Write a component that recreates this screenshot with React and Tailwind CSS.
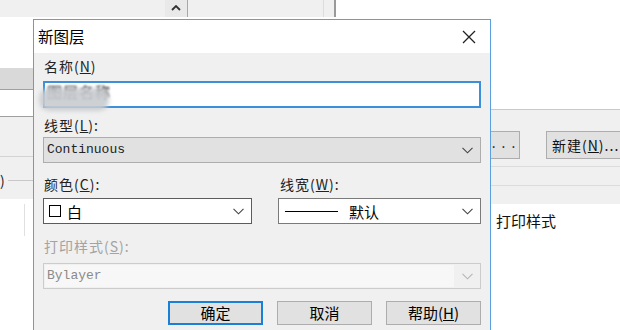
import React from 'react';

const cjk = { fontFamily: '"Noto Sans CJK SC", "Noto Sans", sans-serif' };
const mono = { fontFamily: '"Liberation Mono", "Noto Sans CJK SC", monospace' };

function Chevron({ color = '#444' }) {
  return (
    <svg width="11" height="7" viewBox="0 0 11 7" className="shrink-0">
      <polyline points="0.5,0.8 5.5,5.8 10.5,0.8" fill="none" stroke={color} strokeWidth="1.1" />
    </svg>
  );
}

function Label({ children, className = '' }) {
  return (
    <div className={`h-[16px] flex items-center text-[14px] tracking-[1px] leading-none ${className}`}>{children}</div>
  );
}

function Btn({ children, primary }) {
  return (
    <div
      className={`w-[95px] h-[24px] flex items-center justify-center bg-[#e1e1e1] text-[15px] text-black ${
        primary ? 'border-2 border-[#1c7fd6]' : 'border border-[#adadad]'
      }`}
    >
      {children}
    </div>
  );
}

export default function App() {
  return (
    <div className="relative w-[620px] h-[330px] overflow-hidden bg-white" style={cjk}>
      {/* background window */}
      <div className="flex flex-col h-full">
        <div className="h-[17px] flex shrink-0">
          <div className="w-[165px] bg-[#f0f0f0]" />
          <div className="w-[22px] bg-[#e9e9e9] flex items-start justify-center pt-[5px]">
            <svg width="10" height="6" viewBox="0 0 10 6">
              <polyline points="1,5 5,1 9,5" fill="none" stroke="#333" strokeWidth="1.8" />
            </svg>
          </div>
          <div className="w-px bg-[#a8a8a8]" />
          <div className="w-[136px] bg-[#f0f0f0] border-r border-[#dddddd]" />
          <div className="w-[10px] bg-[#f0f0f0]" />
          <div className="w-[2px] bg-[#9a9a9a]" />
          <div className="flex-1 bg-white" />
        </div>
        <div className="h-[2px] bg-white shrink-0" />
        <div className="flex flex-1">
          <div className="w-[33px] flex flex-col shrink-0">
            <div className="h-[49px] bg-white" />
            <div className="h-[22px] bg-[#d9d9d9] border-b border-[#a0a0a0]" />
            <div className="h-[27px] bg-white border-b border-[#a0a0a0]" />
            <div className="h-[40px] bg-[#f0f0f0] border-b border-[#d4d4d4]" />
            <div className="h-[42px] bg-[#f0f0f0] flex items-center gap-[3px] pt-[4px]">
              <span className="text-[14px] leading-none text-[#222]">)</span>
              <div className="flex-1 h-px bg-[#c8c8c8]" />
            </div>
            <div className="flex-1 bg-white pl-[24px] pt-[5px]">
              <div className="w-px h-[32px] bg-[#e0e0e0]" />
            </div>
          </div>
          <div className="flex-1" />
          <div className="w-[130px] flex flex-col shrink-0">
            <div className="h-[91px] bg-white border-b border-[#c8c8c8]" />
            <div className="h-[94px] bg-[#f0f0f0] flex flex-col">
              <div className="flex items-center gap-[26px] mt-[21px]">
                <div className="w-[30px] h-[28px] bg-[#e1e1e1] border border-[#adadad] border-l-0 flex items-center justify-center text-[13px] text-[#333] tracking-[2px]" style={mono}>
                  ...
                </div>
                <div className="flex-1 h-[28px] bg-[#e1e1e1] border border-[#adadad] border-r-0 flex items-center pl-[5px] text-[14px] tracking-[1px] text-[#111] whitespace-nowrap overflow-hidden">
                  新建(<u>N</u>)...
                </div>
              </div>
              <div className="h-px bg-[#dcdcdc] mt-[7px]" />
              <div className="h-px bg-[#dcdcdc] mt-[18px]" />
            </div>
            <div className="flex-1 bg-white pl-[6px] pt-[7px] text-[15px] text-[#111] leading-[20px]">打印样式</div>
          </div>
        </div>
      </div>

      {/* dialog */}
      <div className="absolute left-[33px] top-[19px] w-[458px] h-[330px] border border-[#5aa0de] bg-[#f0f0f0] flex flex-col">
        <div className="h-[33px] bg-white flex items-center justify-between pl-[4px] pr-[14px] shrink-0">
          <span className="text-[15.5px] text-black leading-none">新图层</span>
          <svg width="14" height="14" viewBox="0 0 14 14">
            <path d="M1 1 L13 13 M13 1 L1 13" stroke="#222" strokeWidth="1.3" />
          </svg>
        </div>
        <div className="flex flex-col px-[9px]">
          <Label className="mt-[5px] ml-[1px] text-[#222]">名称(<u>N</u>)</Label>
          <div className="mt-[7px] h-[27px] bg-white border-2 border-[#3d8fd9] flex items-start pl-[2px]">
            <span className="text-[15px] text-[#222] tracking-[1px] leading-none mt-[1px] blur-[1.2px]">图层名称</span>
          </div>
          <div className="h-0 relative">
            <div className="absolute left-[-4px] top-[-20px] w-[70px] h-[23px] rounded-[10px] bg-[#c9ccd0] blur-[2px] opacity-90" />
          </div>

          <Label className="mt-[9px] ml-[1px] text-[#222]">线型(<u>L</u>):</Label>
          <div className="mt-[4px] h-[26px] bg-[#e1e1e1] border border-[#adadad] flex items-center justify-between pl-[3px] pr-[7px]">
            <span className="text-[13px] text-[#222]" style={mono}>Continuous</span>
            <Chevron />
          </div>

          <div className="flex gap-[26px] mt-[13px]">
            <div className="w-[209px] flex flex-col">
              <Label className="ml-[1px] text-[#222]">颜色(<u>C</u>):</Label>
              <div className="mt-[6px] h-[26px] bg-white border border-[#5c5c5c] flex items-center justify-between pl-[5px] pr-[7px]">
                <div className="flex items-center gap-[6px]">
                  <div className="w-[12px] h-[12px] border border-black" />
                  <span className="text-[15px] text-black leading-none">白</span>
                </div>
                <Chevron />
              </div>
            </div>
            <div className="flex-1 flex flex-col">
              <Label className="ml-[2px] text-[#222]">线宽(<u>W</u>):</Label>
              <div className="mt-[6px] h-[26px] bg-white border border-[#7a7a7a] flex items-center justify-between pl-[6px] pr-[7px]">
                <div className="flex items-center gap-[11px]">
                  <div className="w-[53px] h-px bg-black" />
                  <span className="text-[15px] text-black leading-none">默认</span>
                </div>
                <Chevron />
              </div>
            </div>
          </div>

          <Label className="mt-[14px] ml-[1px] text-[#a3a3a3]">打印样式(<u>S</u>):</Label>
          <div className="mt-[9px] h-[26px] bg-[#f0f0f0] border border-[#cccccc] flex items-center justify-between p-[1px] pr-[7px]">
            <div className="w-[409px] h-full bg-[#f7f7f7] flex items-center pl-[2px]">
              <span className="text-[13px] text-[#8a8a8a]" style={mono}>Bylayer</span>
            </div>
            <Chevron color="#b5b5b5" />
          </div>

          <div className="mt-[12px] flex justify-end gap-[14px]">
            <Btn primary>确定</Btn>
            <Btn>取消</Btn>
            <Btn>帮助(<u>H</u>)</Btn>
          </div>
        </div>
      </div>
    </div>
  );
}
